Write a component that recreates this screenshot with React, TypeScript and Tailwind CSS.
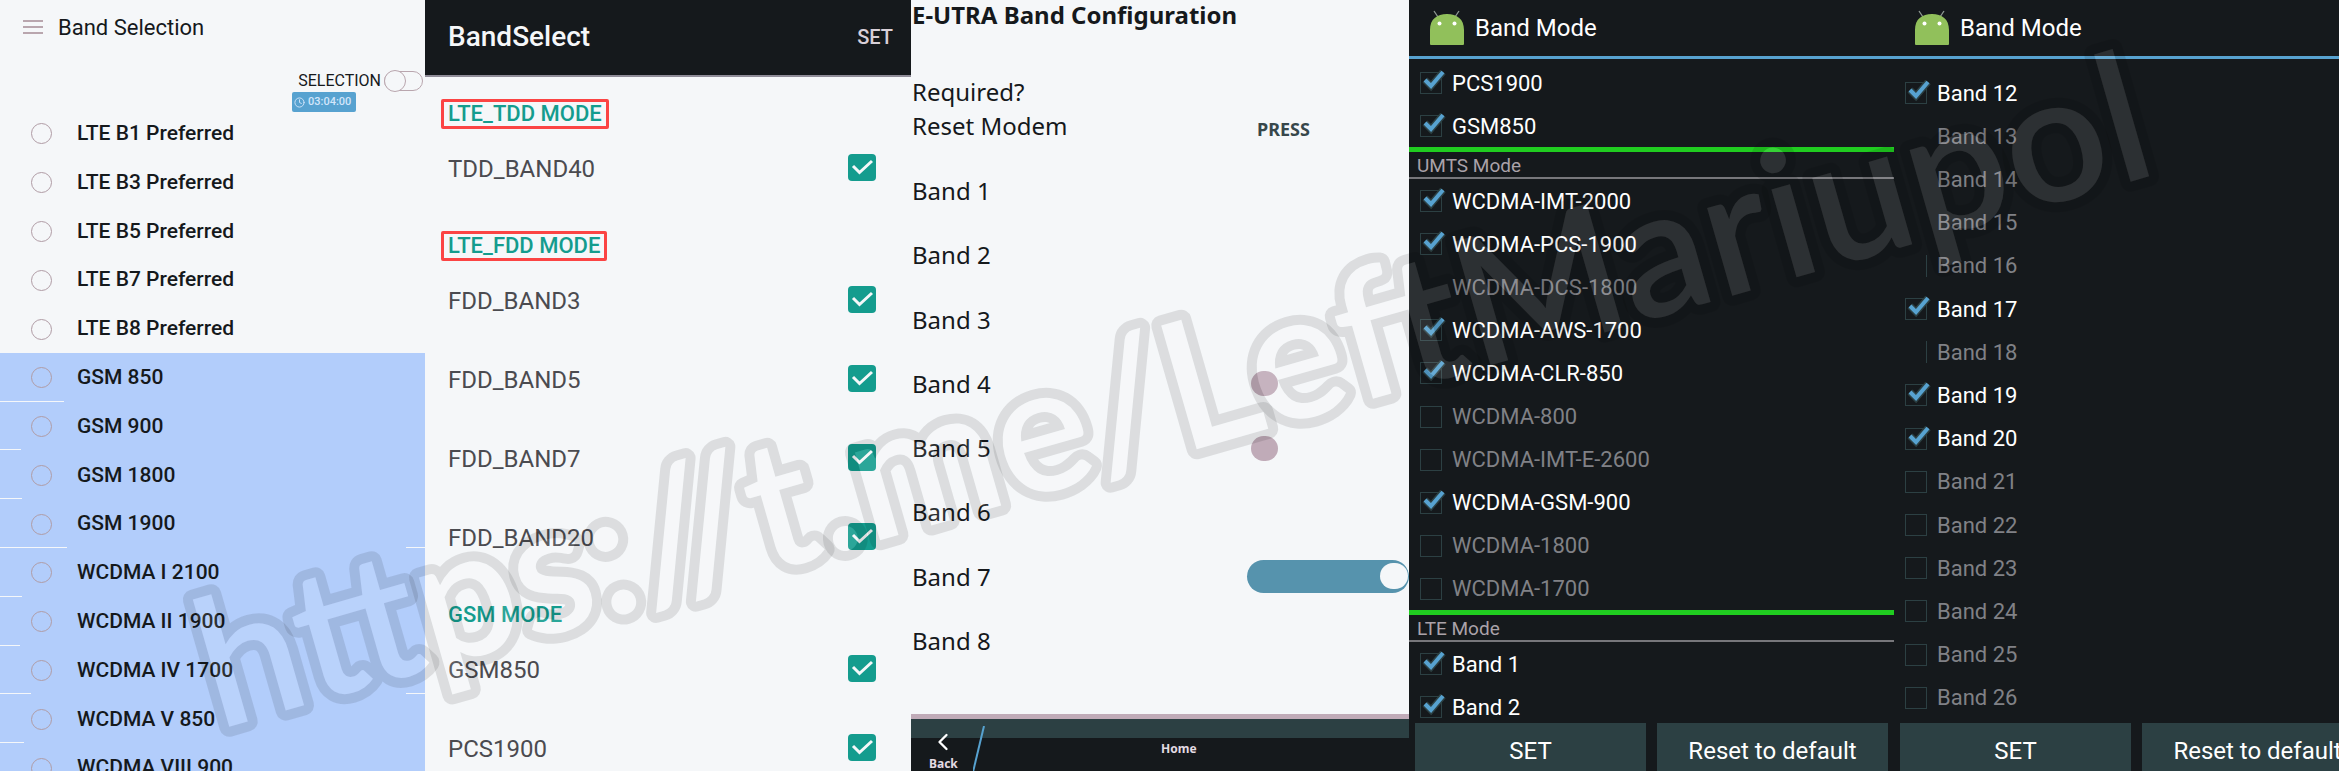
import { ChevronLeft, Clock } from "lucide-react"
import { clsx } from "clsx"

type Band = { name: string; on?: boolean; box?: "full" | "side" | "none" }

const lteBands = ["LTE B1 Preferred", "LTE B3 Preferred", "LTE B5 Preferred", "LTE B7 Preferred", "LTE B8 Preferred"]

// tick = divider stub on the left edge, end = stub on the right edge
const otherBands = [
  { name: "GSM 850", tick: "w-[64px]", end: "" },
  { name: "GSM 900", tick: "w-[21px]", end: "" },
  { name: "GSM 1800", tick: "w-[22px]", end: "" },
  { name: "GSM 1900", tick: "w-[67px]", end: "w-[19px]" },
  { name: "WCDMA I 2100", tick: "w-[22px]", end: "" },
  { name: "WCDMA II 1900", tick: "w-[20px]", end: "" },
  { name: "WCDMA IV 1700", tick: "w-[31px]", end: "w-[19px]" },
  { name: "WCDMA V 850", tick: "w-[24px]", end: "" },
  { name: "WCDMA VIII 900", tick: "", end: "" },
]

const selectGroups = [
  { title: "LTE_TDD MODE", boxed: true, items: ["TDD_BAND40"] },
  { title: "LTE_FDD MODE", boxed: true, items: ["FDD_BAND3", "FDD_BAND5", "FDD_BAND7", "FDD_BAND20"] },
  { title: "GSM MODE", boxed: false, items: ["GSM850", "PCS1900"] },
]

const eutraBands = [
  { name: "Band 1", control: "" },
  { name: "Band 2", control: "" },
  { name: "Band 3", control: "" },
  { name: "Band 4", control: "off" },
  { name: "Band 5", control: "off" },
  { name: "Band 6", control: "" },
  { name: "Band 7", control: "on" },
  { name: "Band 8", control: "" },
]

const gsmMode: Band[] = [
  { name: "PCS1900", on: true },
  { name: "GSM850", on: true },
]

const umtsMode: Band[] = [
  { name: "WCDMA-IMT-2000", on: true },
  { name: "WCDMA-PCS-1900", on: true },
  { name: "WCDMA-DCS-1800", box: "none" },
  { name: "WCDMA-AWS-1700", on: true },
  { name: "WCDMA-CLR-850", on: true },
  { name: "WCDMA-800" },
  { name: "WCDMA-IMT-E-2600" },
  { name: "WCDMA-GSM-900", on: true },
  { name: "WCDMA-1800" },
  { name: "WCDMA-1700" },
]

const lteMode: Band[] = [
  { name: "Band 1", on: true },
  { name: "Band 2", on: true },
]

const moreBands: Band[] = [
  { name: "Band 12", on: true },
  { name: "Band 13", box: "none" },
  { name: "Band 14", box: "none" },
  { name: "Band 15", box: "none" },
  { name: "Band 16", box: "side" },
  { name: "Band 17", on: true },
  { name: "Band 18", box: "side" },
  { name: "Band 19", on: true },
  { name: "Band 20", on: true },
  { name: "Band 21" },
  { name: "Band 22" },
  { name: "Band 23" },
  { name: "Band 24" },
  { name: "Band 25" },
  { name: "Band 26" },
]

function RadioRow({ name }: { name: string }) {
  return (
    <label className="flex h-full items-center pt-px pl-[31px] text-[21px] font-medium">
      <input type="radio" name="band" className="mr-[25px] size-[21px] shrink-0 appearance-none rounded-full border border-[#b09ca5]" />
      {name}
    </label>
  )
}

function BandSelection() {
  return (
    <section className="min-w-0 overflow-hidden text-[#15191c]">
      <header className="flex h-[54px] items-center pl-[23px]">
        <button aria-label="Menu">
          <svg viewBox="0 0 20 14" className="h-[14px] w-5" stroke="#b9a6ae" strokeWidth="2">
            <path d="M0 1h20M0 7h20M0 13h20" />
          </svg>
        </button>
        <h1 className="ml-[15px] text-[22px]">Band Selection</h1>
      </header>
      <div className="flex h-[55px] flex-col items-end">
        <label className="mt-4 flex h-[22px] items-center gap-[3px] pr-[2px] text-base">
          SELECTION
          <span className="relative flex h-[22px] w-[39px] items-center">
            <input type="checkbox" role="switch" className="h-5 w-full appearance-none rounded-full border border-[#b9a6ae]" />
            <span className="absolute left-0 size-[22px] rounded-full border border-[#b9a6ae] bg-[#f5f7f9]" />
          </span>
        </label>
        <span className="mr-[69px] flex h-5 w-[64px] shrink-0 items-center gap-[3px] rounded-xs bg-[#57a2d0] px-[2px] text-[11px] font-medium text-[#d3e6fb]">
          <Clock className="size-[11px] shrink-0" />
          03:04:00
        </span>
      </div>
      <div className="grid h-[683px] auto-rows-fr">
        {lteBands.map((name) => (
          <RadioRow key={name} name={name} />
        ))}
        {otherBands.map((band) => (
          <div key={band.name} className="relative bg-[#b2cdfb]">
            <RadioRow name={band.name} />
            {band.tick && <span className={clsx("absolute bottom-0 left-0 h-px bg-[#f5f7f9]", band.tick)} />}
            {band.end && <span className={clsx("absolute right-0 bottom-0 h-px bg-[#f5f7f9]", band.end)} />}
          </div>
        ))}
      </div>
    </section>
  )
}

function BandSelect() {
  return (
    <section className="min-w-0 overflow-hidden">
      <header className="flex h-[77px] items-center justify-between border-b-2 border-[#8f8c98] bg-[#15191c] pr-[18px] pb-px pl-[23px] text-[#f5f7f9]">
        <h1 className="text-[28px] font-medium">BandSelect</h1>
        <button className="text-xl font-medium text-[#d9d0d8]">SET</button>
      </header>
      {selectGroups.map((group) => (
        <div key={group.title}>
          <div className="flex h-[53px] items-end pb-px pl-4">
            <h2
              className={clsx(
                "rounded-xs border-3 px-1 text-[22px] leading-6 font-medium text-[#149c8e]",
                group.boxed ? "border-[#fb4444]" : "border-transparent",
              )}
            >
              {group.title}
            </h2>
          </div>
          {group.items.map((item) => (
            <label key={item} className="flex h-[79px] items-center justify-between pr-[35px] pb-[2px] pl-[23px] text-2xl text-[#4b4b50]">
              {item}
              <span className="relative mb-[3px] flex">
                <input type="checkbox" defaultChecked className="h-[27px] w-7 appearance-none rounded-sm bg-[#149c8e]" />
                <svg viewBox="0 0 28 27" className="pointer-events-none absolute inset-0" fill="none" stroke="#f5f7f9" strokeWidth="3">
                  <path d="M5 12l6.500 6.500L24 7" />
                </svg>
              </span>
            </label>
          ))}
        </div>
      ))}
    </section>
  )
}

function BandConfiguration() {
  return (
    <section className="flex min-w-0 flex-col overflow-hidden font-['Noto_Sans',sans-serif] text-[#15191c]">
      <h1 className="h-[75px] pl-px text-2xl leading-[30px] font-bold">E-UTRA Band Configuration</h1>
      <p className="pl-px text-2xl leading-[34px]">Required?</p>
      <div className="flex h-[34px] items-center pl-px text-2xl leading-[34px]">
        <span className="w-[345px]">Reset Modem</span>
        <button className="pt-[6px] text-lg font-bold text-[#37474b]">PRESS</button>
      </div>
      <div className="mt-4 grid h-[514px] auto-rows-fr">
        {eutraBands.map((band) => (
          <label key={band.name} className="flex items-center justify-between pl-px text-2xl">
            {band.name}
            {band.control === "off" && (
              <input type="checkbox" role="switch" className="mr-[131px] h-[25px] w-[27px] appearance-none rounded-full bg-[#c0abb8]" />
            )}
            {band.control === "on" && (
              <span className="relative flex">
                <input type="checkbox" role="switch" defaultChecked className="h-[33px] w-[162px] appearance-none rounded-full bg-[#5693ad]" />
                <span className="absolute top-[3px] right-px h-[26px] w-7 rounded-full bg-[#f5f7f9]" />
              </span>
            )}
          </label>
        ))}
      </div>
      <footer className="mt-auto h-[57px] shrink-0 border-t-5 border-[#c0abb8] bg-[#15191c] text-xs font-bold text-[#e3dbe3]">
        <div className="relative h-[19px] bg-[#2c4043]">
          <button className="absolute top-[9px] left-[18px] flex flex-col items-center">
            <ChevronLeft className="size-7 text-white" />
            Back
          </button>
          <svg viewBox="0 0 12 46" className="absolute top-[7px] left-[62px] h-[46px] w-3" stroke="#57a2d0" strokeWidth="2">
            <path d="M11 0L0 46" />
          </svg>
          <button className="absolute top-[22px] left-[250px]">Home</button>
        </div>
      </footer>
    </section>
  )
}

function AndroidHead() {
  return (
    <svg viewBox="0 0 36 36" className="h-9 w-9">
      <path d="M5 1l4 6M30 1l-4 6" stroke="#8f9a94" strokeWidth="1.300" />
      <path d="M1 35V20C1 9 8 4 18 4s17 5 17 16v14q0 1-1 1H2q-1 0-1-1z" fill="#91c05b" />
      <circle cx="10.500" cy="13.500" r="2" fill="#fff" />
      <circle cx="25.500" cy="13.500" r="2" fill="#fff" />
    </svg>
  )
}

function ModeHeader() {
  return (
    <header className="flex h-[59px] shrink-0 items-center border-b-3 border-[#57a2d0] pl-5">
      <AndroidHead />
      <h1 className="ml-[10px] text-2xl">Band Mode</h1>
    </header>
  )
}

function ModeTitle({ children }: { children: string }) {
  return (
    <h2 className="h-8 shrink-0 border-t-5 border-b-2 border-t-[#20cc20] border-b-[#77777b] pl-2 text-[19px] leading-[27px] text-[#aaa2a9]">
      {children}
    </h2>
  )
}

function ModeRow({ band }: { band: Band }) {
  return (
    <label className={clsx("flex items-center gap-[10px] pt-px pl-[11px] text-[22px]", band.on ? "text-white" : "text-[#808186]")}>
      <span className="relative flex">
        <input
          type="checkbox"
          defaultChecked={band.on}
          className={clsx(
            "size-[22px] appearance-none border-[#2c4043]",
            band.box === "none" ? "border-0" : band.box === "side" ? "border-r" : "border",
          )}
        />
        {band.on && (
          <svg viewBox="0 0 26 22" className="pointer-events-none absolute top-[-2px] left-0 h-[22px] w-[26px]" fill="none">
            <path d="M5 10l6 6L23 2" stroke="#2c4043" strokeWidth="7" />
            <path d="M5 10l6 6L23 2" stroke="#57a2d0" strokeWidth="4" />
          </svg>
        )}
      </span>
      {band.name}
    </label>
  )
}

function ModeFooter() {
  return (
    <footer className="grid h-12 shrink-0 grid-cols-2 gap-[11px] px-[6px] text-2xl">
      <button className="bg-[#2c4043] pt-2 whitespace-nowrap">SET</button>
      <button className="bg-[#2c4043] pt-2 whitespace-nowrap">Reset to default</button>
    </footer>
  )
}

function ModeList() {
  return (
    <section className="flex min-w-0 flex-col overflow-hidden bg-[#15191c] text-white">
      <ModeHeader />
      <div className="min-h-0 flex-1 overflow-hidden">
        <div className="grid h-[88px] auto-rows-fr pt-[2px]">
          {gsmMode.map((band) => (
            <ModeRow key={band.name} band={band} />
          ))}
        </div>
        <ModeTitle>UMTS Mode</ModeTitle>
        <div className="grid h-[431px] auto-rows-fr">
          {umtsMode.map((band) => (
            <ModeRow key={band.name} band={band} />
          ))}
        </div>
        <ModeTitle>LTE Mode</ModeTitle>
        <div className="grid h-[86px] auto-rows-fr">
          {lteMode.map((band) => (
            <ModeRow key={band.name} band={band} />
          ))}
        </div>
      </div>
      <ModeFooter />
    </section>
  )
}

function ModeListMore() {
  return (
    <section className="min-w-0 overflow-hidden bg-[#15191c] text-white">
      <div className="flex h-full w-[109%] flex-col">
        <ModeHeader />
        <div className="min-h-0 flex-1 overflow-hidden pt-3">
          <div className="grid h-[648px] auto-rows-fr">
            {moreBands.map((band) => (
              <ModeRow key={band.name} band={band} />
            ))}
          </div>
        </div>
        <ModeFooter />
      </div>
    </section>
  )
}

// Outline sits outside the letters, so the fill is cut out of the stroke with a mask
function Watermark() {
  return (
    <svg
      viewBox="0 0 2339 771"
      className="pointer-events-none absolute inset-0 h-full w-full font-[Lato,sans-serif] text-[179px] font-semibold"
    >
      <defs>
        <mask id="outside" maskUnits="userSpaceOnUse" x="-100" y="-300" width="2400" height="500">
          <rect x="-100" y="-300" width="2400" height="500" fill="white" />
          <text fill="black">https://t.me/LeftMariupol</text>
        </mask>
      </defs>
      <g transform="translate(218 730) rotate(-16)">
        <text mask="url(#outside)" fill="none" stroke="black" strokeOpacity="0.1" strokeWidth="20" strokeLinejoin="round">
          https://t.me/LeftMariupol
        </text>
        <text fill="white" fillOpacity="0.1">
          https://t.me/LeftMariupol
        </text>
      </g>
    </svg>
  )
}

export default function App() {
  return (
    <main className="relative grid h-screen grid-cols-[425fr_486fr_498fr_485fr_445fr] grid-rows-1 overflow-hidden bg-[#f5f7f9] font-[Roboto,sans-serif]">
      <BandSelection />
      <BandSelect />
      <BandConfiguration />
      <ModeList />
      <ModeListMore />
      <Watermark />
    </main>
  )
}
